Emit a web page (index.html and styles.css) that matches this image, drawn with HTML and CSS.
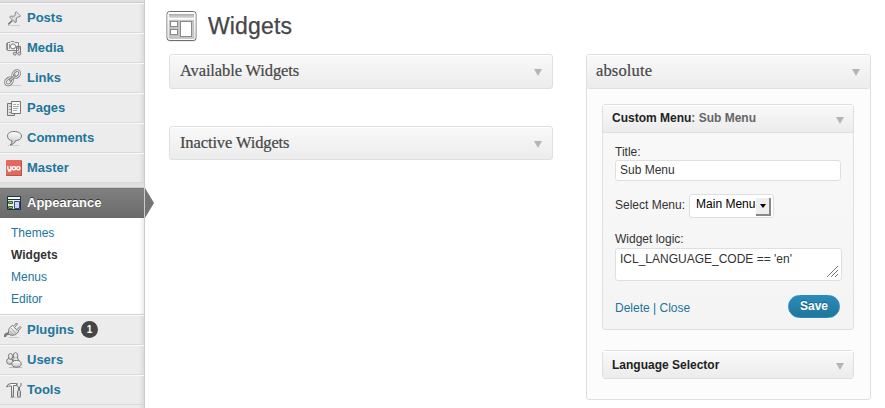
FILE: index.html
```html
<!DOCTYPE html>
<html lang="en">
<head>
<meta charset="utf-8">
<title>Widgets</title>
<link rel="stylesheet" href="styles.css">
</head>
<body>
<svg width="0" height="0" class="defs" aria-hidden="true">
  <defs>
    <linearGradient id="silver" x1="0" y1="0" x2="0" y2="1"><stop offset="0" stop-color="#fff"/><stop offset="1" stop-color="#c4c4c4"/></linearGradient>
    <linearGradient id="metal" x1="0" y1="0" x2="0" y2="1"><stop offset="0" stop-color="#aaa"/><stop offset="1" stop-color="#ddd"/></linearGradient>
  </defs>
</svg>
<div class="layout">
  <nav class="sidebar">
    <div class="separator separator-top"></div>
    <a class="item"><svg class="icon" viewBox="0 0 18 18"><path d="M3 16.500H15" stroke="#ccc"/><path d="M7.200 11.600 3.200 15.400" stroke="#777" stroke-width="1.500"/><path d="M11 2.600 15.500 7 13.600 8 12.400 8 11.200 10 11.300 13 10 13.500 4.500 8.200 5.500 7.200 8.500 7.200 10.300 5.500 10.300 3.900Z" fill="url(#silver)" stroke="#888"/><path d="M7.500 8.500 11.500 5.500" stroke="#aaa" fill="none"/></svg>Posts</a>
    <a class="item"><svg class="icon" viewBox="0 0 18 18"><path d="M2.500 3.500H5L6 2.500H9L10 3.500H13.500V11.500H2.500Z" fill="#eee" stroke="#888"/><circle cx="8" cy="7.400" r="2.500" fill="#fff" stroke="#777"/><path d="M1.500 4V11M4.500 5V10" stroke="#999"/><path d="M11.500 14V7.500H15.500V14M11.500 9H15.500" fill="none" stroke="#777"/><circle cx="9.800" cy="14.600" r="1.500" fill="#ddd" stroke="#777"/><circle cx="14.300" cy="14.600" r="1.500" fill="#ddd" stroke="#777"/></svg>Media</a>
    <a class="item"><svg class="icon icon-link" viewBox="0 0 18 18"><path d="M6 16.500H17" stroke="#ccc"/><g fill="none"><ellipse cx="12.200" cy="5.200" rx="4" ry="2.900" transform="rotate(-45 12.200 5.200)" stroke="#808080" stroke-width="2.800"/><ellipse cx="12.200" cy="5.200" rx="4" ry="2.900" transform="rotate(-45 12.200 5.200)" stroke="#eee" stroke-width="1"/><ellipse cx="5" cy="12.400" rx="4" ry="2.900" transform="rotate(-45 5 12.400)" stroke="#808080" stroke-width="2.800"/><ellipse cx="5" cy="12.400" rx="4" ry="2.900" transform="rotate(-45 5 12.400)" stroke="#eee" stroke-width="1"/><path d="M5.500 12 11.700 5.800" stroke="#808080" stroke-width="2.600"/><path d="M6 11.500 11.200 6.300" stroke="#eee"/></g></svg>Links</a>
    <a class="item"><svg class="icon" viewBox="0 0 18 18"><path d="M2.500 4.500H9.500V16.500H2.500Z" fill="#ddd" stroke="#777"/><path d="M4 7.500H6M4 10.500H6M4 13.500H6" stroke="#999"/><path d="M6.500 2.500H15.500V14.500H6.500Z" fill="#f8f8f8" stroke="#777"/><path d="M8 5.500H11M12 5.500H14M8 7.500H14M8 9.500H13M8 11.500H12" stroke="#aaa"/></svg>Pages</a>
    <a class="item"><svg class="icon" viewBox="0 0 18 18"><path d="M3 16.500H14" stroke="#ccc"/><path d="M9 2.500C4.700 2.500 2.500 4.500 2.500 7.100 2.500 9.700 4.700 11.500 7 11.700 7.200 13.500 6.300 15 5 16 8 15.500 10 14 10.500 11.700 14 11.400 16.500 9.700 16.500 7 16.500 4.500 13.500 2.500 9 2.500Z" fill="url(#silver)" stroke="#777"/></svg>Comments</a>
    <a class="item"><svg class="icon" viewBox="0 0 18 18"><rect x="1" y="1" width="16" height="16" rx="1" fill="#e5685c"/><path d="M1 16.500H17M16.500 2V16" stroke="#b9544b"/><path d="M2.800 7V9.500Q2.800 10.700 4 10.700H5.700M5.900 7V10.900Q5.900 12 4.800 12H3" fill="none" stroke="#fff" stroke-width="1.400"/><rect x="7.300" y="7.600" width="3.200" height="3.200" rx="1.200" fill="none" stroke="#fff" stroke-width="1.400"/><rect x="11.700" y="7.600" width="3.200" height="3.200" rx="1.200" fill="none" stroke="#fff" stroke-width="1.400"/></svg>Master</a>
    <div class="separator"></div>
    <a class="item current"><svg class="icon" viewBox="0 0 18 18"><rect x="2" y="2" width="14" height="14" rx="1" fill="#1b3442"/><path d="M3 3H15V5H3Z" fill="#f4f8f8"/><path d="M3 6H15V15H3Z" fill="#e4eedb"/><path d="M3.500 7.500H7.500V9.500H3.500ZM3.500 12.500H7.500V14.500H3.500Z" fill="#8fb878" stroke="#3d652f"/><path d="M9.500 7.500H14.500V14.500H9.500Z" fill="#cbd4fa" stroke="#344687"/></svg>Appearance</a>
    <div class="submenu"><a>Themes</a><a class="active">Widgets</a><a>Menus</a><a>Editor</a></div>
    <a class="item"><svg class="icon icon-link" viewBox="0 0 18 18"><path d="M5 16.500H15" stroke="#ccc"/><path d="M1 16Q1 12.500 5 12.500" fill="none" stroke="#777" stroke-width="2.400"/><path d="M4.500 12.500Q4 6.500 8.500 4.500L14.500 10.500Q11.500 15.300 6 14Z" fill="url(#silver)" stroke="#777"/><path d="M9 5.500 12.500 2 13.500 3 10.500 6.500M12.500 9 16 5.500 17 6.500 14 10" fill="#eee" stroke="#777"/><path d="M7 7 11.500 12M6 10 8.500 13" stroke="#aaa"/></svg>Plugins<span class="badge">1</span></a>
    <a class="item"><svg class="icon" viewBox="0 0 18 18"><path d="M4 16.500H17" stroke="#bbb"/><g fill="url(#silver)" stroke="#777"><ellipse cx="4.800" cy="10.300" rx="3.200" ry="3"/><ellipse cx="5.500" cy="5.500" rx="2.100" ry="3"/><ellipse cx="10.500" cy="4.800" rx="2.300" ry="3.100"/><path d="M8.300 7.500 7.500 10H14L12.500 7"/><ellipse cx="11.500" cy="12.800" rx="4.700" ry="3.300"/></g></svg>Users</a>
    <a class="item"><svg class="icon" viewBox="0 0 18 18"><path d="M5 16.500H16" stroke="#ccc"/><path d="M1.500 6Q2.500 2.500 6 2.500H11.500V4.500H8.500V16H6.500V5Q3.500 4.500 1.500 6Z" fill="url(#silver)" stroke="#777"/><path d="M12 2V4Q12 6 13.500 6V9.500M16 2V4Q16 6 14.500 6V9.500" fill="none" stroke="#777"/><rect x="12.500" y="9.500" width="3" height="6.500" rx="1" fill="#ccc" stroke="#777"/></svg>Tools</a>
  </nav>
  <svg class="arrow" viewBox="0 0 9 30"><path d="M0 0 9 15 0 30Z" fill="#747474"/></svg>
  <main class="content">
    <header class="page-header"><svg class="page-icon" viewBox="0 0 32 32"><path d="M2 31H30" stroke="#ddd"/><rect x="1" y="1.500" width="29" height="29" rx="2.500" fill="url(#silver)" stroke="#6c6c6c"/><rect x="2" y="2.500" width="27" height="27" rx="2" fill="none" stroke="#fff"/><path d="M3 4H28V8H3Z" fill="url(#metal)"/><path d="M3 8.500H28" stroke="#fff"/><path d="M3 10H28V28H3Z" fill="#c4c4c4"/><g fill="#fff" stroke="#8a8a8a"><rect x="4.500" y="11.500" width="7" height="5"/><rect x="4.500" y="19.500" width="7" height="5"/><rect x="14.500" y="11.500" width="11" height="15"/></g></svg><h1>Widgets</h1></header>
    <div class="columns">
      <section class="left">
        <div class="bar"><h2>Available Widgets</h2><i class="caret"></i></div>
        <div class="bar inactive"><h2>Inactive Widgets</h2><i class="caret"></i></div>
      </section>
      <section class="panel">
        <div class="bar panel-head"><h2>absolute</h2><i class="caret"></i></div>
        <div class="panel-body">
          <div class="widget open">
            <div class="widget-head"><h3>Custom Menu<span>: Sub Menu</span></h3><i class="caret"></i></div>
            <form class="form">
              <label>Title:</label>
              <div class="field">Sub Menu</div>
              <div class="select-row"><label>Select Menu:</label><div class="select">Main Menu<span class="drop"><i></i></span></div></div>
              <label>Widget logic:</label>
              <div class="field area">ICL_LANGUAGE_CODE == 'en'<svg class="grip" viewBox="0 0 11 11"><path d="M0 11 11 0M4 11 11 4M8 11 11 8" stroke="#777" fill="none"/></svg></div>
              <div class="actions"><a>Delete | Close</a><span class="save">Save</span></div>
            </form>
          </div>
          <div class="widget"><div class="widget-head"><h3>Language Selector</h3><i class="caret"></i></div></div>
        </div>
      </section>
    </div>
  </main>
</div>
</body>
</html>
```

FILE: styles.css
```css
* { box-sizing: border-box; }
body { margin: 0; background: #fff; color: #333; font: 12px/15px "Liberation Sans", Arial, sans-serif; overflow: hidden; }
.defs { position: absolute; }
h1, h2, h3 { margin: 0; font-weight: 400; }
.layout { display: flex; width: 885px; height: 408px; position: relative; }
.sidebar { width: 145px; flex: none; background: #ececec; border-right: 1px solid #ccc; box-shadow: inset -6px 0 5px -5px rgba(0,0,0,.12); }
.separator { height: 5px; background: #dfdfdf; border-bottom: 1px solid #ccc; }
.separator-top { height: 3px; }
.item { display: flex; align-items: center; height: 30px; padding: 0 0 1px 5px; color: #21759b; font-size: 13px; font-weight: 700; border-top: 1px solid #f9f9f9; border-bottom: 1px solid #dadada; }
.icon { width: 18px; height: 18px; margin-right: 4px; fill: none; flex: none; }
.icon-link { margin-left: -1px; margin-right: 5px; }
.current { color: #fff; background: linear-gradient(#808080, #6b6b6b); border-color: #777 transparent #696969; text-shadow: 0 -1px 0 #333; }
.arrow { position: absolute; left: 145px; top: 188px; width: 9px; height: 30px; }
.submenu { height: 97px; padding: 4px 0 0 11px; background: #fff; border-bottom: 1px solid #d4d4d4; box-shadow: inset -6px 0 5px -5px rgba(0,0,0,.12); }
.submenu a { display: block; height: 22px; line-height: 22px; color: #21759b; }
.submenu .active { color: #333; font-weight: 700; }
.badge { width: 17px; height: 17px; margin-left: 7px; border-radius: 50%; background: #464646; color: #fff; font-size: 10px; line-height: 17px; text-align: center; }
.content { flex: 1; padding: 10px 14px 0 21px; }
.page-header { display: flex; height: 44px; }
.page-icon { width: 32px; height: 32px; }
h1 { margin-left: 10px; font-size: 23px; line-height: 33px; color: #464646; letter-spacing: .15px; -webkit-text-stroke: .25px #464646; }
.columns { display: flex; justify-content: space-between; margin-left: 3px; }
.left { width: 384px; }
.bar { display: flex; justify-content: space-between; align-items: center; height: 35px; padding: 0 10px; border: 1px solid #dfdfdf; border-radius: 3px; background: linear-gradient(#f9f9f9, #ececec); box-shadow: inset 0 1px 0 #fff; }
.inactive { margin-top: 37px; height: 34px; }
h2 { padding-bottom: 1px; font: 16.5px/20px Georgia, "Liberation Serif", serif; letter-spacing: -.12px; color: #464646; -webkit-text-stroke: .2px #464646; }
.panel-head h2 { letter-spacing: .15px; }
.caret { width: 0; height: 0; margin-top: 2px; border: 4px solid transparent; border-top: 7px solid #b5b5b5; border-bottom: 0; }
.panel { width: 285px; height: 346px; border: 1px solid #dfdfdf; border-radius: 3px; background: #fcfcfc; }
.panel-head { height: 34px; border-width: 0 0 1px; padding: 0 10px 0 9px; }
.panel-body { padding: 15px 16px 0 15px; }
.widget { border: 1px solid #dfdfdf; border-radius: 3px; background: linear-gradient(#f9f9f9, #f4f4f4); }
.open { height: 226px; margin-bottom: 20px; }
.widget-head { display: flex; justify-content: space-between; align-items: center; height: 28px; padding: 0 9px; border-bottom: 1px solid #dfdfdf; background: linear-gradient(#f9f9f9, #ececec); box-shadow: inset 0 1px 0 #fff; }
.widget-head .caret { margin-top: 4px; }
.widget:not(.open) .widget-head { border: 0; height: 27px; }
.widget:not(.open) h3 { padding-top: 2px; }
h3 { font-size: 12px; line-height: 15px; font-weight: 700; color: #222; }
h3 span { color: #666; }
.form { padding: 12px 12px 0; }
.form label { display: block; height: 15px; }
.field { width: 226px; height: 21px; padding: 2px 4px; border: 1px solid #dfdfdf; border-radius: 3px; background: #fff; }
.select-row { display: flex; align-items: center; margin: 13px 0 14px; height: 24px; }
.select-row label { margin-top: -2px; }
.select { display: flex; justify-content: space-between; margin-left: 4px; width: 85px; height: 24px; padding: 2px; padding-left: 6px; line-height: 15px; border: 1px solid #dfdfdf; border-radius: 3px; background: #fff; color: #000; }
.drop { display: flex; align-items: center; justify-content: center; width: 15px; height: 18px; margin-top: 1px; background: #eee; border-right: 2px solid #888; border-bottom: 2px solid #888; }
.drop i { border: 3px solid transparent; border-top: 4px solid #000; border-bottom: 0; }
.area { position: relative; width: 227px; height: 33px; margin-top: 1px; padding-top: 3px; }
.grip { position: absolute; right: 3px; bottom: 3px; width: 11px; height: 11px; }
.actions { display: flex; justify-content: space-between; margin-top: 14px; padding-right: 1px; color: #21759b; }
.actions a { padding-top: 6px; }
.save { width: 52px; height: 23px; border-radius: 12px; border: 1px solid #298cba; background: linear-gradient(#298cba, #21759b); color: #fff; font-weight: 700; line-height: 20px; text-align: center; text-shadow: 0 -1px 0 rgba(0,0,0,.3); }
```
